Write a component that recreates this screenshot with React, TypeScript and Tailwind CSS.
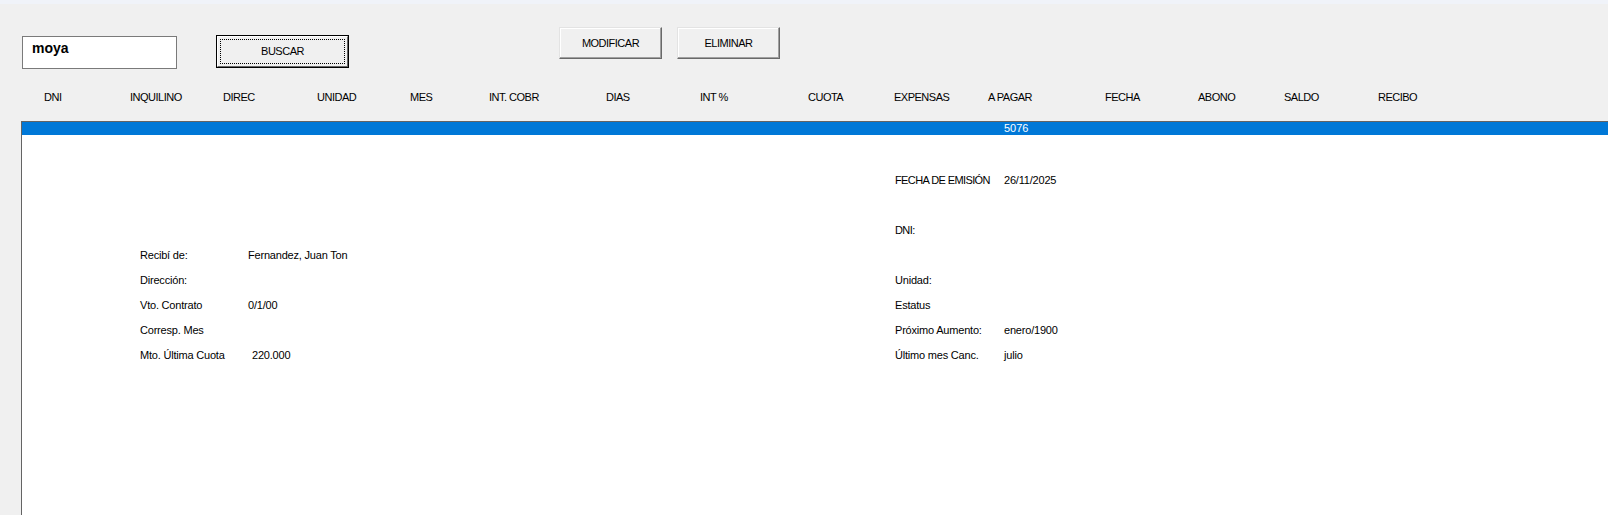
import React from 'react';

const headers: [string, number][] = [
  ['DNI', 86],
  ['INQUILINO', 93],
  ['DIREC', 94],
  ['UNIDAD', 93],
  ['MES', 79],
  ['INT. COBR', 117],
  ['DIAS', 94],
  ['INT %', 108],
  ['CUOTA', 86],
  ['EXPENSAS', 94],
  ['A PAGAR', 117],
  ['FECHA', 93],
  ['ABONO', 86],
  ['SALDO', 94],
  ['RECIBO', 0],
];

// [left label, left value, right label, right value]
const rows: [string, string, string, string][] = [
  ['', '', 'FECHA DE EMISIÓN', '26/11/2025'],
  ['', '', '', ''],
  ['', '', 'DNI:', ''],
  ['Recibí de:', 'Fernandez, Juan Ton', '', ''],
  ['Dirección:', '', 'Unidad:', ''],
  ['Vto. Contrato', '0/1/00', 'Estatus', ''],
  ['Corresp. Mes', '', 'Próximo Aumento:', 'enero/1900'],
  ['Mto. Última Cuota', '220.000', 'Último mes Canc.', 'julio'],
];

const btn3d =
  'border border-t-[#e3e3e3] border-l-[#e3e3e3] border-r-[#696969] border-b-[#696969] bg-[#f0f0f0] shadow-[inset_-1px_-1px_0_#a0a0a0,inset_1px_1px_0_#ffffff] text-[11px] tracking-[-0.5px] text-black';

const isCaps = (s: string) => /[A-Z]/.test(s) && s === s.toUpperCase();

export default function App() {
  return (
    <div className="h-[515px] w-full overflow-hidden bg-[#f0f0f0] font-['Liberation_Sans',Arial,sans-serif] text-black flex flex-col">
      <div className="h-[4px] bg-[#f0f3f9]" />

      <div className="flex items-start pl-[22px] h-[83px]">
        <div className="mt-[32px] h-[33px] w-[155px] border border-[#7a7a7a] bg-white pl-[9px] pt-[2px] text-[14px] font-bold leading-[18px]">
          moya
        </div>
        <button className="mt-[31px] ml-[39px] h-[33px] w-[133px] border border-black bg-[#f0f0f0] p-0">
          <div className="h-full w-full border border-t-white border-l-white border-r-[#696969] border-b-[#696969] p-[2px]">
            <div className="flex h-full w-full items-center justify-center border border-dotted border-black text-[11px] tracking-[-0.5px]">
              BUSCAR
            </div>
          </div>
        </button>
        <button className={`mt-[23px] ml-[210px] h-[32px] w-[103px] ${btn3d}`}>MODIFICAR</button>
        <button className={`mt-[23px] ml-[15px] h-[32px] w-[103px] ${btn3d}`}>ELIMINAR</button>
      </div>

      <div className="flex h-[34px] items-start pl-[44px] pt-[4px] text-[11px] tracking-[-0.5px]">
        {headers.map(([h, w]) => (
          <div key={h} style={w ? { width: w } : undefined} className="shrink-0 leading-[13px]">
            {h}
          </div>
        ))}
      </div>

      <div className="ml-[21px] flex flex-1 flex-col border-l border-t border-[#646464] bg-white">
        <div className="h-[13px] bg-[#0078d7] pl-[982px] text-[11px] leading-[13px] text-white">5076</div>
        <div className="grid grid-cols-[108px_647px_109px_1fr] pl-[118px] pt-[33px] text-[11px]">
          {rows.map((r, i) => (
            <React.Fragment key={i}>
              {r.map((c, j) => (
                <div
                  key={j}
                  className={`flex h-[25px] items-center whitespace-nowrap ${
                    isCaps(c) ? 'tracking-[-0.6px]' : 'tracking-[-0.2px]'
                  } ${j === 1 && i === 7 ? 'pl-[4px]' : ''}`}
                >
                  {c}
                </div>
              ))}
            </React.Fragment>
          ))}
        </div>
      </div>
    </div>
  );
}
